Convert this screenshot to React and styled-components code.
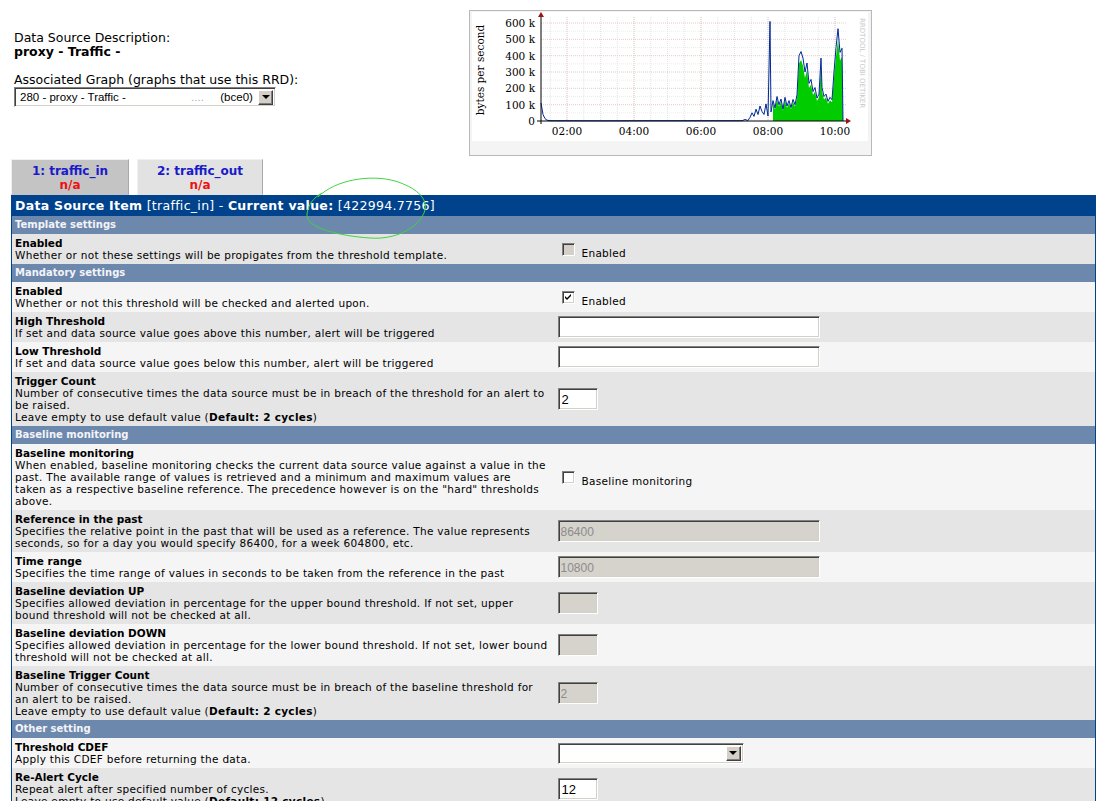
import React from 'react';
import styled, { createGlobalStyle } from 'styled-components';

const GlobalStyle = createGlobalStyle`
  body {
    margin: 0;
    background: #fff;
    font-family: "DejaVu Sans", Verdana, sans-serif;
    color: #000;
  }
`;

const Page = styled.div`
  position: relative;
  padding: 10px 5px 0 11px;
`;

const TopArea = styled.div`
  display: flex;
  height: 149px;
`;

const SourceInfo = styled.div`
  width: 455px;
  padding: 21px 0 0 3px;
  font-size: 12.5px;
  line-height: 14px;
`;

const InfoValue = styled.div`
  font-weight: bold;
  margin-bottom: 14px;
`;

const FakeSelect = styled.div`
  display: flex;
  align-items: center;
  justify-content: space-between;
  width: 262px;
  height: 20px;
  box-sizing: border-box;
  background: #fff;
  border: 1px solid;
  border-color: #808080 #fff #fff #808080;
  box-shadow: inset 1px 1px #404040, inset -1px -1px #d4d0c8;
  padding: 0 2px 0 5px;
  font-family: "Liberation Sans", Arial, sans-serif;
  font-size: 11.5px;
  white-space: nowrap;
`;

const Redacted = styled.span`
  display: inline-block;
  width: ${(p) => p.w}px;
  color: #b0b0b0;
`;

const ArrowButton = styled.span`
  display: flex;
  align-items: center;
  justify-content: center;
  width: 15px;
  height: 15px;
  box-sizing: border-box;
  background: #d4d0c8;
  border: 1px solid;
  border-color: #fff #404040 #404040 #fff;
  box-shadow: inset -1px -1px #808080;
  &::after {
    content: '';
    border-left: 4px solid transparent;
    border-right: 4px solid transparent;
    border-top: 4px solid #000;
  }
`;

const GraphFrame = styled.div`
  width: 403px;
  height: 146px;
  box-sizing: border-box;
  border: 1px solid #b8b8b8;
  background: #f4f4f4;
  svg {
    display: block;
  }
`;

const Tabs = styled.div`
  display: flex;
  gap: 8px;
  height: 36px;
`;

const Tab = styled.div`
  width: ${(p) => p.w}px;
  box-sizing: border-box;
  padding-top: 4px;
  background: ${(p) => (p.active ? '#c4c4c4' : '#e2e2e2')};
  border: 1px solid;
  border-color: #f0f0f0 #a8a8a8 transparent #f0f0f0;
  text-align: center;
  font-size: 12px;
  font-weight: bold;
  line-height: 14px;
`;

const TabName = styled.div`
  color: #1a1ac8;
`;

const TabValue = styled.div`
  color: #f01010;
`;

const Annotation = styled.svg`
  position: absolute;
  left: 0;
  top: 0;
  pointer-events: none;
`;

const Table = styled.table`
  width: 100%;
  border-collapse: collapse;
  border-left: 1px solid #00438c;
  border-right: 1px solid #00438c;
  font-size: 10.5px;
  letter-spacing: 0.3px;
  line-height: 12px;
`;

const HeaderCell = styled.td`
  height: 21px;
  padding: 0 0 0 3px;
  background: #00438c;
  color: #fff;
  font-size: 12.5px;
  letter-spacing: 0.3px;
  white-space: nowrap;
`;

const SectionCell = styled.td`
  height: 18px;
  padding: 0 0 0 3px;
  background: #6d88ad;
  color: #f4f4f8;
  font-size: 10px;
  letter-spacing: 0;
  font-weight: bold;
`;

const Row = styled.tr`
  background: ${(p) => (p.dark ? '#e5e5e5' : '#f5f5f5')};
`;

const DescCell = styled.td`
  width: 50%;
  padding: 3px 0 3px 3px;
  vertical-align: top;
  white-space: nowrap;
`;

const ControlCell = styled.td`
  padding: 0 0 0 4px;
  vertical-align: middle;
`;

const FieldTitle = styled.div`
  font-weight: bold;
  letter-spacing: 0;
`;

const TextInput = styled.input`
  display: block;
  width: ${(p) => p.w}px;
  height: 22px;
  box-sizing: border-box;
  margin: 0;
  padding: 1px 3px 0;
  border: 1px solid;
  border-color: #808080 #fff #fff #808080;
  box-shadow: inset 1px 1px #404040, inset -1px -1px #d4d0c8;
  background: #fff;
  font-family: "Liberation Sans", Arial, sans-serif;
  font-size: 13px;
  color: #000;
  outline: none;
  &:disabled {
    background: #d6d2cc;
    color: #8c8c8c;
    font-size: 12px;
    padding-left: 2px;
  }
`;

const CdefSelect = styled(FakeSelect)`
  width: 186px;
  height: 21px;
`;

const Choice = styled.label`
  display: flex;
  align-items: center;
  padding-left: 4px;
`;

const CheckBox = styled.span`
  display: flex;
  align-items: center;
  justify-content: center;
  width: 13px;
  height: 13px;
  box-sizing: border-box;
  border: 1px solid;
  border-color: #808080 #fff #fff #808080;
  box-shadow: inset 1px 1px #404040, inset -1px -1px #d4d0c8;
  background: ${(p) => (p.disabled ? '#d4d0c8' : '#fff')};
`;

const ChoiceText = styled.span`
  margin-left: 7px;
  padding-top: 7px;
`;

const toY = (v) => 121 - v * 0.1633;

const blue = [
  [541, 110], [543, 40], [545, 15], [547, 5], [550, 2], [600, 1], [650, 2], [700, 2],
  [742, 2], [745, 9], [748, 3], [750, 22], [752, 50], [754, 28], [756, 72], [758, 40],
  [760, 92], [762, 58], [764, 40], [766, 105], [768, 30], [770, 610], [771, 55], [773, 125],
  [775, 80], [777, 150], [779, 100], [781, 135], [783, 72], [785, 145], [787, 92], [789, 125],
  [791, 82], [793, 132], [795, 100], [797, 160], [799, 400], [801, 425], [803, 385], [805, 300],
  [807, 355], [809, 230], [811, 255], [813, 180], [815, 205], [817, 140], [819, 165], [821, 385],
  [822, 205], [824, 150], [826, 165], [828, 120], [830, 145], [832, 130], [834, 300], [836, 450],
  [838, 565], [840, 420], [842, 445], [843, 0],
];

const linePath = blue.map(([x, v], i) => `${i ? 'L' : 'M'}${x} ${toY(v).toFixed(1)}`).join(' ');
const greenPts = blue.filter(([x]) => x >= 773);
const areaPath =
  `M773 121 ` +
  greenPts.map(([x, v]) => `L${x} ${toY(v * 0.88).toFixed(1)}`).join(' ') +
  ` L843 121 Z`;

function TrafficGraph() {
  const minor = [];
  for (let x = 550.25; x < 846; x += 16.75) minor.push(x);
  const rows = [];
  for (let v = 50; v <= 600; v += 50) rows.push(v);
  return (
    <GraphFrame>
      <svg width="401" height="144" viewBox="470 11 401 144">
        <rect x="472" y="12" width="396" height="129" fill="#fff" />
        {minor.map((x) => (
          <line key={x} x1={x} y1="17" x2={x} y2="121" stroke="#e4e4e4" strokeDasharray="1 1" />
        ))}
        {[567, 634, 701, 768, 835].map((x) => (
          <line key={x} x1={x} y1="17" x2={x} y2="121" stroke="#e8c8c8" strokeDasharray="1 1" />
        ))}
        {rows.map((v) => (
          <line key={v} x1="541" y1={toY(v)} x2="846" y2={toY(v)} stroke={v % 100 ? '#ececec' : '#e2cccc'} strokeDasharray="1 1" />
        ))}
        <path d={areaPath} fill="#00cc00" />
        <path d={linePath} fill="none" stroke="#002a97" strokeWidth="1" />
        <line x1="537" y1="121" x2="846" y2="121" stroke="#000" />
        <line x1="541" y1="124" x2="541" y2="16" stroke="#000" />
        <path d="M846 118 L851 121 L846 124 Z" fill="#a01010" />
        <path d="M538 17 L541 12 L544 17 Z" fill="#a01010" />
        <g fontFamily='"DejaVu Serif", serif' fontSize="10.5" fill="#000">
          {[0, 100, 200, 300, 400, 500, 600].map((v) => (
            <text key={v} x="535" y={toY(v) + 4} textAnchor="end">
              {v ? `${v} k` : '0'}
            </text>
          ))}
          {[['02:00', 567], ['04:00', 634], ['06:00', 701], ['08:00', 768], ['10:00', 835]].map(([t, x]) => (
            <text key={t} x={x} y="135" textAnchor="middle">{t}</text>
          ))}
          <text x="484" y="70" textAnchor="middle" transform="rotate(-90 484 70)" fontSize="10.5">
            bytes per second
          </text>
        </g>
        <text x="860" y="18" transform="rotate(90 860 18)" fontFamily='"DejaVu Sans", sans-serif' fontSize="7" fill="#c8c8c8">
          RRDTOOL / TOBI OETIKER
        </text>
      </svg>
    </GraphFrame>
  );
}

const Check = ({ on }) =>
  on ? (
    <svg width="7" height="7" viewBox="0 0 7 7">
      <path d="M0 2 L2 4 L6 0 L6 2 L2 6 L0 4 Z" fill="#000" />
    </svg>
  ) : null;

function Control({ c }) {
  if (!c) return null;
  if (c.type === 'check') {
    return (
      <Choice>
        <CheckBox disabled={c.disabled}>
          <Check on={c.checked} />
        </CheckBox>
        <ChoiceText>{c.label}</ChoiceText>
      </Choice>
    );
  }
  if (c.type === 'select') {
    return (
      <CdefSelect>
        <span />
        <ArrowButton />
      </CdefSelect>
    );
  }
  return <TextInput w={c.w} disabled={c.disabled} defaultValue={c.value || ''} />;
}

const defaultNote = (n) => (
  <>
    Leave empty to use default value (<b>Default: {n} cycles</b>)
  </>
);

const sections = [
  {
    title: 'Template settings',
    rows: [
      {
        title: 'Enabled',
        dark: true,
        lines: ['Whether or not these settings will be propigates from the threshold template.'],
        control: { type: 'check', disabled: true, label: 'Enabled' },
      },
    ],
  },
  {
    title: 'Mandatory settings',
    rows: [
      {
        title: 'Enabled',
        lines: ['Whether or not this threshold will be checked and alerted upon.'],
        control: { type: 'check', checked: true, label: 'Enabled' },
      },
      {
        title: 'High Threshold',
        dark: true,
        lines: ['If set and data source value goes above this number, alert will be triggered'],
        control: { type: 'text', w: 262 },
      },
      {
        title: 'Low Threshold',
        lines: ['If set and data source value goes below this number, alert will be triggered'],
        control: { type: 'text', w: 262 },
      },
      {
        title: 'Trigger Count',
        dark: true,
        lines: [
          'Number of consecutive times the data source must be in breach of the threshold for an alert to',
          'be raised.',
          defaultNote(2),
        ],
        control: { type: 'text', w: 40, value: '2' },
      },
    ],
  },
  {
    title: 'Baseline monitoring',
    rows: [
      {
        title: 'Baseline monitoring',
        lines: [
          'When enabled, baseline monitoring checks the current data source value against a value in the',
          'past. The available range of values is retrieved and a minimum and maximum values are',
          'taken as a respective baseline reference. The precedence however is on the "hard" thresholds',
          'above.',
        ],
        control: { type: 'check', label: 'Baseline monitoring' },
      },
      {
        title: 'Reference in the past',
        dark: true,
        lines: [
          'Specifies the relative point in the past that will be used as a reference. The value represents',
          'seconds, so for a day you would specify 86400, for a week 604800, etc.',
        ],
        control: { type: 'text', w: 262, value: '86400', disabled: true },
      },
      {
        title: 'Time range',
        lines: ['Specifies the time range of values in seconds to be taken from the reference in the past'],
        control: { type: 'text', w: 262, value: '10800', disabled: true },
      },
      {
        title: 'Baseline deviation UP',
        dark: true,
        lines: [
          'Specifies allowed deviation in percentage for the upper bound threshold. If not set, upper',
          'bound threshold will not be checked at all.',
        ],
        control: { type: 'text', w: 40, disabled: true },
      },
      {
        title: 'Baseline deviation DOWN',
        lines: [
          'Specifies allowed deviation in percentage for the lower bound threshold. If not set, lower bound',
          'threshold will not be checked at all.',
        ],
        control: { type: 'text', w: 40, disabled: true },
      },
      {
        title: 'Baseline Trigger Count',
        dark: true,
        lines: [
          'Number of consecutive times the data source must be in breach of the baseline threshold for',
          'an alert to be raised.',
          defaultNote(2),
        ],
        control: { type: 'text', w: 40, value: '2', disabled: true },
      },
    ],
  },
  {
    title: 'Other setting',
    rows: [
      {
        title: 'Threshold CDEF',
        lines: ['Apply this CDEF before returning the data.'],
        control: { type: 'select' },
      },
      {
        title: 'Re-Alert Cycle',
        dark: true,
        lines: ['Repeat alert after specified number of cycles.', defaultNote(12)],
        control: { type: 'text', w: 40, value: '12' },
      },
    ],
  },
];

export default function App() {
  return (
    <Page>
      <GlobalStyle />
      <TopArea>
        <SourceInfo>
          <div>Data Source Description:</div>
          <InfoValue>proxy - Traffic - </InfoValue>
          <div>Associated Graph (graphs that use this RRD):</div>
          <FakeSelect>
            <span>
              280 - proxy - Traffic - <Redacted w={62}>&nbsp;</Redacted>
              <Redacted w={26}>....</Redacted> (bce0)
            </span>
            <ArrowButton />
          </FakeSelect>
        </SourceInfo>
        <TrafficGraph />
      </TopArea>

      <Tabs>
        <Tab w={118} active>
          <TabName>1: traffic_in</TabName>
          <TabValue>n/a</TabValue>
        </Tab>
        <Tab w={126}>
          <TabName>2: traffic_out</TabName>
          <TabValue>n/a</TabValue>
        </Tab>
      </Tabs>

      <Table>
        <tbody>
          <tr>
            <HeaderCell colSpan={2}>
              <b>Data Source Item</b> [traffic_in] - <b>Current value:</b> [422994.7756]
            </HeaderCell>
          </tr>
          {sections.map((s) => (
            <React.Fragment key={s.title}>
              <tr>
                <SectionCell colSpan={2}>{s.title}</SectionCell>
              </tr>
              {s.rows.map((r) => (
                <Row key={r.title} dark={r.dark}>
                  <DescCell>
                    <FieldTitle>{r.title}</FieldTitle>
                    {r.lines.map((l, i) => (
                      <div key={i}>{l}</div>
                    ))}
                  </DescCell>
                  <ControlCell>
                    <Control c={r.control} />
                  </ControlCell>
                </Row>
              ))}
            </React.Fragment>
          ))}
        </tbody>
      </Table>

      <Annotation width="1101" height="801">
        <path
          d="M318 197 C335 180 370 174 395 181 C415 187 428 198 425 210 C420 228 395 240 370 238 C340 236 305 228 307 214 C308 205 313 198 322 193"
          fill="none"
          stroke="#3fd43f"
          strokeWidth="1"
        />
      </Annotation>
    </Page>
  );
}
